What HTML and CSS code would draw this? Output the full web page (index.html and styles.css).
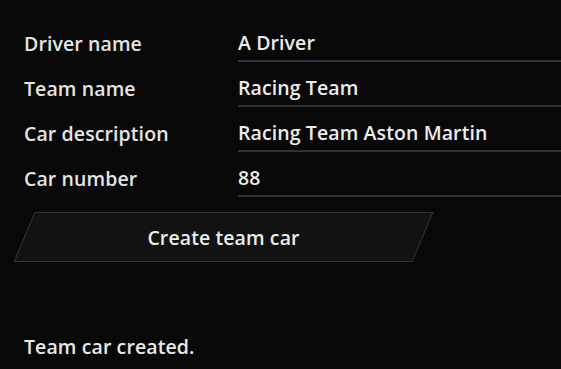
FILE: index.html
```html
<!DOCTYPE html>
<html lang="en">
<head>
  <meta charset="UTF-8" />
  <title>Team car</title>
  <link rel="stylesheet" href="styles.css">
</head>
<body>
  <form class="car-form">
    <div class="row">
      <label for="driver">Driver name</label>
      <input type="text" id="driver" value="A Driver">
    </div>
    <div class="row">
      <label for="team">Team name</label>
      <input type="text" id="team" value="Racing Team">
    </div>
    <div class="row">
      <label for="desc">Car description</label>
      <input type="text" id="desc" value="Racing Team Aston Martin">
    </div>
    <div class="row">
      <label for="number">Car number</label>
      <input type="text" id="number" value="88">
    </div>

    <button type="button" class="create-btn"><span>Create team car</span></button>
  </form>

  <p class="status">Team car created.</p>
</body>
</html>
```

FILE: styles.css
```css
body {
  margin: 0;
  background: #080808;
  color: #e8e8e8;
  font-family: 'Open Sans', sans-serif;
  font-size: 19.5px;
  font-weight: 600;
  letter-spacing: 0.1px;
  overflow: hidden;
}

.car-form {
  padding: 25px 0 0 24px;
  display: flex;
  flex-direction: column;
  gap: 8px;
}

.row {
  display: grid;
  grid-template-columns: 214px 1fr;
  align-items: center;
}

label {
  color: #e4e4e4;
}

input {
  height: 37px;
  box-sizing: border-box;
  padding: 0;
  border: none;
  border-bottom: 2px solid #333;
  background: transparent;
  color: #ececec;
  font-family: inherit;
  font-size: inherit;
  font-weight: inherit;
  letter-spacing: inherit;
  outline: none;
}

.create-btn {
  position: relative;
  margin-top: 7px;
  width: 399px;
  height: 50px;
  padding: 0;
  border: none;
  background: transparent;
  color: #ececec;
  font-family: inherit;
  font-size: inherit;
  font-weight: inherit;
  letter-spacing: inherit;
  cursor: pointer;
}

.create-btn::before {
  content: "";
  position: absolute;
  inset: 0;
  background: #121212;
  border: 1px solid #333;
  transform: skewX(-22.8deg);
}

.create-btn span {
  position: relative;
}

.status {
  margin: 71px 0 0 24px;
}
```
